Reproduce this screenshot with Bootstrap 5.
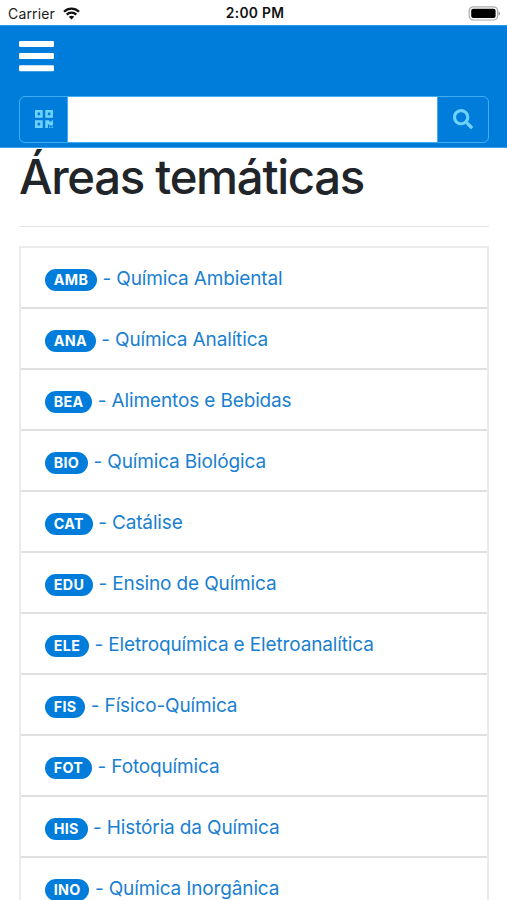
<!DOCTYPE html>
<html lang="pt-BR">
<head>
<meta charset="utf-8">
<meta name="viewport" content="width=device-width, initial-scale=1">
<title>Áreas temáticas</title>
<link href="https://cdn.jsdelivr.net/npm/bootstrap@5.3.0/dist/css/bootstrap.min.css" rel="stylesheet">
<style>
  :root { --brand: #007ddb; --sky: #6fd2fb; }
  body { font-family: Inter, "Liberation Sans", sans-serif; height: 900px; overflow: hidden; color: #212529; }
  .status { height: 25px; padding: 2px 7px 0 8px; font-size: 14px; line-height: 23px; color: #1c1c1c; }
  .status > * { flex: 1 1 0; }
  .carrier { letter-spacing: .15px; }
  .clock { font-weight: 600; letter-spacing: .3px; color: #111; white-space: nowrap; font-size: 13.8px; padding-left: 2px; }
  .topbar { background: var(--brand); height: 122.5px; padding: 15px 18px 0 19px; border-top: 1px solid #2b97e8; border-bottom: 1px solid #3aa0e8; }
  .menu-btn { line-height: 0; height: 31px; }
  .search { margin-top: 24px; height: 46.5px; }
  .search .btn { border: 1.5px solid #41aef3; color: var(--sky); border-radius: 6px; line-height: 0; }
  .search .btn-code { width: 49px; }
  .search .btn-find { width: 52px; }
  .search .form-control { border: 1px solid #41aef3; border-left: 0; border-right: 0; }
  .page { padding: 0 18px 0 19px; }
  h1 { font-size: 47.3px; line-height: 58px; height: 59px; font-weight: 500; letter-spacing: -1.3px; margin: 0; white-space: nowrap; }
  .rule { margin: 19px 0 19px 1px; border-top: 1px solid #e6e6e6; opacity: 1; }
  .areas { --bs-list-group-border-radius: 0; border: 2px solid #ebebeb; border-bottom: 0; }
  .areas .list-group-item { height: 61.05px; border: 0; border-bottom: 2px solid #e0e0e0; padding: 15px 24px 0; font-size: 19px; line-height: 31px; letter-spacing: -.14px; color: #1a80d0; white-space: nowrap; }
  .tag { background: var(--brand); font-size: 14.3px; font-weight: 700; line-height: 22px; height: 22px; padding: 0 8.8px; letter-spacing: .3px; position: relative; top: .4px; margin-right: 5.5px; }
</style>
</head>
<body class="bg-white">
<div class="status d-flex align-items-center">
  <div class="d-flex align-items-center"><span class="carrier">Carrier</span>
    <svg class="ms-2" width="17" height="13" viewBox="0 0 17 13" fill="none" stroke="#111" stroke-width="2.3"><path d="M1 4.7C5.2.6 11.8.6 16 4.7M3.700 7.600c2.700-2.600 6.900-2.600 9.600 0"/><path d="M5.800 9.800c1.500-1.500 3.900-1.500 5.400 0L8.500 12.600z" fill="#111" stroke="none"/></svg>
  </div>
  <div class="text-center clock">2:00 PM</div>
  <div class="d-flex justify-content-end">
    <svg width="32" height="15" viewBox="0 0 32 15"><rect x="1.200" y=".8" width="28.400" height="13.200" rx="4" fill="none" stroke="#aaa" stroke-width="1.200"/><rect x="3.200" y="2.800" width="24.400" height="9.200" rx="2" fill="#000"/><path d="M30.700 5.300c1.400.8 1.400 3.400 0 4.200z" fill="#777"/></svg>
  </div>
</div>
<header class="topbar">
  <button class="btn p-0 border-0 d-block menu-btn" type="button" aria-label="Menu">
    <svg width="35" height="31" viewBox="0 0 35 31" fill="#fff"><rect width="35" height="6" rx="1.3"/><rect y="12.100" width="35" height="6" rx="1.3"/><rect y="24.200" width="35" height="6" rx="1.3"/></svg>
  </button>
  <form class="input-group flex-nowrap search">
    <button class="btn btn-code p-0" type="button" aria-label="Código QR">
      <svg width="18" height="18" viewBox="0 0 448 448" fill="currentColor"><path fill-rule="evenodd" d="M0 192h192V0H0v192zM64 64h64v64H64V64zM256 0v192h192V0H256zm128 128h-64V64h64v64zM0 448h192V256H0v192zm64-128h64v64H64v-64zM416 256h32v128h-96v-32h-32v96h-64V256h96v32h64v-32zM416 416h32v32h-32zM352 416h32v32h-32z"/></svg>
    </button>
    <input class="form-control rounded-0" type="text" aria-label="Buscar">
    <button class="btn btn-find p-0" type="button" aria-label="Pesquisar">
      <svg width="20" height="20" viewBox="0 0 512 512" fill="currentColor"><path d="M505 442.700 405.300 343c-4.500-4.500-10.600-7-17-7H372c27.600-35.300 44-79.700 44-128C416 93.100 322.900 0 208 0S0 93.100 0 208s93.100 208 208 208c48.300 0 92.700-16.400 128-44v16.300c0 6.400 2.500 12.500 7 17l99.700 99.700c9.400 9.400 24.600 9.400 33.900 0l28.300-28.300c9.400-9.400 9.400-24.600.1-34zM208 336c-70.700 0-128-57.200-128-128 0-70.700 57.200-128 128-128 70.700 0 128 57.200 128 128 0 70.700-57.200 128-128 128z"/></svg>
    </button>
  </form>
</header>
<main class="page">
  <h1>Áreas temáticas</h1>
  <hr class="rule">
  <div class="list-group areas">
    <a href="#" class="list-group-item"><span class="badge rounded-pill tag">AMB</span><span>- Química Ambiental</span></a>
    <a href="#" class="list-group-item"><span class="badge rounded-pill tag">ANA</span><span>- Química Analítica</span></a>
    <a href="#" class="list-group-item"><span class="badge rounded-pill tag">BEA</span><span>- Alimentos e Bebidas</span></a>
    <a href="#" class="list-group-item"><span class="badge rounded-pill tag">BIO</span><span>- Química Biológica</span></a>
    <a href="#" class="list-group-item"><span class="badge rounded-pill tag">CAT</span><span>- Catálise</span></a>
    <a href="#" class="list-group-item"><span class="badge rounded-pill tag">EDU</span><span>- Ensino de Química</span></a>
    <a href="#" class="list-group-item"><span class="badge rounded-pill tag">ELE</span><span>- Eletroquímica e Eletroanalítica</span></a>
    <a href="#" class="list-group-item"><span class="badge rounded-pill tag">FIS</span><span>- Físico-Química</span></a>
    <a href="#" class="list-group-item"><span class="badge rounded-pill tag">FOT</span><span>- Fotoquímica</span></a>
    <a href="#" class="list-group-item"><span class="badge rounded-pill tag">HIS</span><span>- História da Química</span></a>
    <a href="#" class="list-group-item"><span class="badge rounded-pill tag">INO</span><span>- Química Inorgânica</span></a>
  </div>
</main>
<script src="https://cdn.jsdelivr.net/npm/bootstrap@5.3.0/dist/js/bootstrap.bundle.min.js"></script>
</body>
</html>
